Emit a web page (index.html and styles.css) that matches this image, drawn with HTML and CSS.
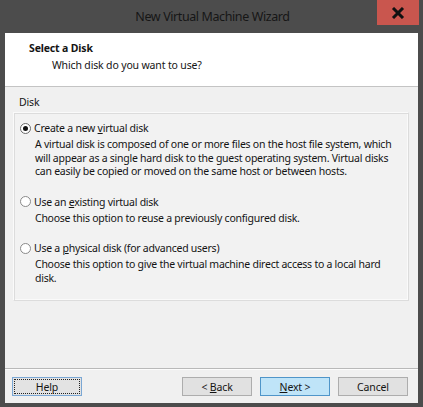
FILE: index.html
```html
<!DOCTYPE html>
<html>
<head>
<meta charset="utf-8">
<link rel="stylesheet" href="styles.css">
</head>
<body>
<div class="window">
  <div class="titlebar">
    <span></span>
    <div class="title">New Virtual Machine Wizard</div>
    <div class="close-wrap"><div class="close"><svg width="14" height="12" viewBox="0 0 14 12"><path d="M2 1 L12 11 M12 1 L2 11" stroke="#111" stroke-width="3" stroke-linecap="butt"/></svg></div></div>
  </div>
  <div class="client">
    <div class="header">
      <div class="h-title">Select a Disk</div>
      <div class="h-sub">Which disk do you want to use?</div>
    </div>
    <div class="body">
      <div class="group-label">Disk</div>
      <div class="group">
        <div class="option">
          <div class="opt-row"><span class="radio checked"></span><span>Create a new <u>v</u>irtual disk</span></div>
          <div class="desc">A virtual disk is composed of one or more files on the host file system, which<br>will appear as a single hard disk to the guest operating system. Virtual disks<br>can easily be copied or moved on the same host or between hosts.</div>
        </div>
        <div class="option">
          <div class="opt-row"><span class="radio"></span><span>Use an <u>e</u>xisting virtual disk</span></div>
          <div class="desc">Choose this option to reuse a previously configured disk.</div>
        </div>
        <div class="option">
          <div class="opt-row"><span class="radio"></span><span>Use a <u>p</u>hysical disk (for advanced users)</span></div>
          <div class="desc">Choose this option to give the virtual machine direct access to a local hard<br>disk.</div>
        </div>
      </div>
    </div>
    <div class="footer">
      <button class="btn help"><span class="focus">Help</span></button>
      <div class="spacer"></div>
      <button class="btn"><span>&lt; <u>B</u>ack</span></button>
      <button class="btn next"><span><u>N</u>ext &gt;</span></button>
      <button class="btn"><span>Cancel</span></button>
    </div>
  </div>
</div>
</body>
</html>
```
FILE: styles.css
```css
html, body {
  margin: 0;
  padding: 0;
  background: #4c4c4c;
}
body {
  font-family: "Noto Sans", "Open Sans", sans-serif;
  font-size: 10.5px;
  letter-spacing: -0.15px;
  color: #141414;
}
.window {
  width: 423px;
  height: 407px;
  background: #4c4c4c;
  display: flex;
  flex-direction: column;
}
.titlebar {
  height: 33px;
  display: grid;
  grid-template-columns: 1fr auto 1fr;
  align-items: start;
}
.title {
  font-size: 12.5px;
  letter-spacing: -0.4px;
  color: #161616;
  line-height: 33px;
  padding-left: 2px;
}
.close-wrap {
  display: flex;
  justify-content: flex-end;
  padding-right: 4px;
}
.close {
  width: 42px;
  height: 25px;
  background: #c9564e;
  display: flex;
  align-items: center;
  justify-content: center;
}
.client {
  flex: 1;
  margin: 0 5px 4px 5px;
  background: #f0f0f0;
  display: flex;
  flex-direction: column;
  min-height: 0;
}
.header {
  height: 54px;
  flex: none;
  background: #ffffff;
  border-bottom: 1px solid #c4c4c4;
  box-sizing: border-box;
  padding: 8px 0 0 24px;
}
.h-title {
  font-weight: bold;
  line-height: 15px;
}
.h-sub {
  padding-left: 23px;
  line-height: 15px;
  margin-top: 2px;
}
.body {
  flex: 1;
  padding: 8px 9px 0 8px;
  min-height: 0;
}
.group-label {
  padding-left: 6px;
  line-height: 14px;
}
.group {
  margin-top: 3px;
  height: 189px;
  box-sizing: border-box;
  border: 1px solid #dcdcdc;
  border-top-color: #fafafa;
  border-left-color: #fafafa;
  box-shadow: inset 1px 1px 0 #dcdcdc, inset -1px -1px 0 #fafafa;
  background: #f2f2f2;
  padding: 8px 0 0 6px;
  white-space: nowrap;
  letter-spacing: -0.25px;
}
.option {
  margin-bottom: 16px;
}
.opt-row {
  display: flex;
  align-items: center;
  line-height: 14px;
}
.radio {
  width: 11px;
  height: 11px;
  border: 1px solid #6a6a6a;
  border-radius: 50%;
  background: #fff;
  box-sizing: border-box;
  margin-right: 3px;
  display: flex;
  align-items: center;
  justify-content: center;
}
.radio:not(.checked) {
  border-color: #8a8a8a;
}
.radio.checked::after {
  content: "";
  width: 5px;
  height: 5px;
  border-radius: 50%;
  background: #111;
}
.desc {
  padding-left: 15px;
  margin-top: 3px;
  line-height: 13.5px;
}
.footer {
  height: 35px;
  flex: none;
  border-top: 1px solid #b9b9b9;
  box-shadow: inset 0 1px 0 #fcfcfc;
  display: flex;
  align-items: flex-start;
  padding: 8px 10px 0 7px;
  gap: 8px;
  box-sizing: border-box;
}
.spacer {
  flex: 1;
}
.btn {
  width: 70px;
  height: 19px;
  font-family: inherit;
  font-size: 10.5px;
  letter-spacing: -0.15px;
  color: #141414;
  background: #e1e1e1;
  border: 1px solid #adadad;
  padding: 0;
  margin: 0;
  display: flex;
  align-items: center;
  justify-content: center;
  box-sizing: border-box;
}
.btn.next {
  background: #bfe4f8;
  border-color: #4f95c9;
}
.btn.help {
  border-color: #7aa7d4;
  padding: 1px;
  background: #e3e3e3;
}
.focus {
  width: 100%;
  height: 100%;
  border: 1px dotted #222;
  box-sizing: border-box;
  display: flex;
  align-items: center;
  justify-content: center;
}
```
